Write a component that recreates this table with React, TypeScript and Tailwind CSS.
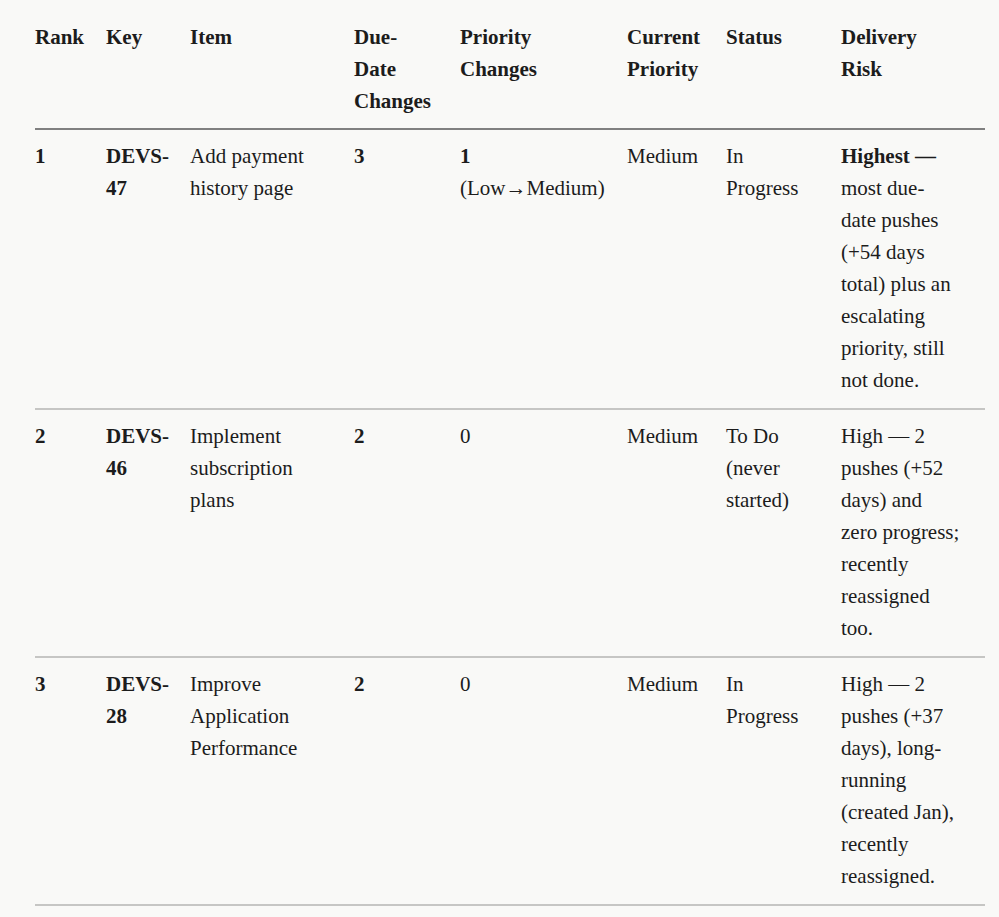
import React from "react"

type Cell = { lines: React.ReactNode[]; bold?: boolean }

const headers: string[][] = [
  ["Rank"],
  ["Key"],
  ["Item"],
  ["Due-", "Date", "Changes"],
  ["Priority", "Changes"],
  ["Current", "Priority"],
  ["Status"],
  ["Delivery", "Risk"],
]

const colWidths = ["w-[71px]", "w-[84px]", "w-[164px]", "w-[106px]", "w-[167px]", "w-[99px]", "w-[115px]", "w-[144px]"]

const rows: Cell[][] = [
  [
    { lines: ["1"], bold: true },
    { lines: ["DEVS-", "47"], bold: true },
    { lines: ["Add payment", "history page"] },
    { lines: ["3"], bold: true },
    { lines: [<strong key="b">1</strong>, "(Low→Medium)"] },
    { lines: ["Medium"] },
    { lines: ["In", "Progress"] },
    {
      lines: [
        <strong key="b">Highest —</strong>,
        "most due-",
        "date pushes",
        "(+54 days",
        "total) plus an",
        "escalating",
        "priority, still",
        "not done.",
      ],
    },
  ],
  [
    { lines: ["2"], bold: true },
    { lines: ["DEVS-", "46"], bold: true },
    { lines: ["Implement", "subscription", "plans"] },
    { lines: ["2"], bold: true },
    { lines: ["0"] },
    { lines: ["Medium"] },
    { lines: ["To Do", "(never", "started)"] },
    { lines: ["High — 2", "pushes (+52", "days) and", "zero progress;", "recently", "reassigned", "too."] },
  ],
  [
    { lines: ["3"], bold: true },
    { lines: ["DEVS-", "28"], bold: true },
    { lines: ["Improve", "Application", "Performance"] },
    { lines: ["2"], bold: true },
    { lines: ["0"] },
    { lines: ["Medium"] },
    { lines: ["In", "Progress"] },
    { lines: ["High — 2", "pushes (+37", "days), long-", "running", "(created Jan),", "recently", "reassigned."] },
  ],
]

export default function App() {
  return (
    <div
      className="min-h-screen bg-[#f9f9f7] px-[35px] pt-[13px] text-[#1c1c1c] text-[21px] leading-[32px]"
      style={{ fontFamily: '"Liberation Serif", "Times New Roman", serif' }}
    >
      <table className="w-[950px] table-fixed border-collapse">
        <colgroup>
          {colWidths.map((w, i) => (
            <col key={i} className={w} />
          ))}
        </colgroup>
        <thead>
          <tr className="border-b-2 border-[#808080]">
            {headers.map((h, i) => (
              <th key={i} className="pt-2 pb-[11px] pr-3 text-left align-top font-bold">
                {h.map((line, j) => (
                  <span key={j} className="block whitespace-nowrap">
                    {line}
                  </span>
                ))}
              </th>
            ))}
          </tr>
        </thead>
        <tbody>
          {rows.map((row, ri) => (
            <tr key={ri} className="border-b-2 border-[#c6c6c4]">
              {row.map((cell, ci) => (
                <td
                  key={ci}
                  className={`pt-[10px] pb-3 pr-3 align-top ${cell.bold ? "font-bold" : "font-normal"}`}
                >
                  {cell.lines.map((line, j) => (
                    <span key={j} className="block whitespace-nowrap">
                      {line}
                    </span>
                  ))}
                </td>
              ))}
            </tr>
          ))}
        </tbody>
      </table>
    </div>
  )
}
